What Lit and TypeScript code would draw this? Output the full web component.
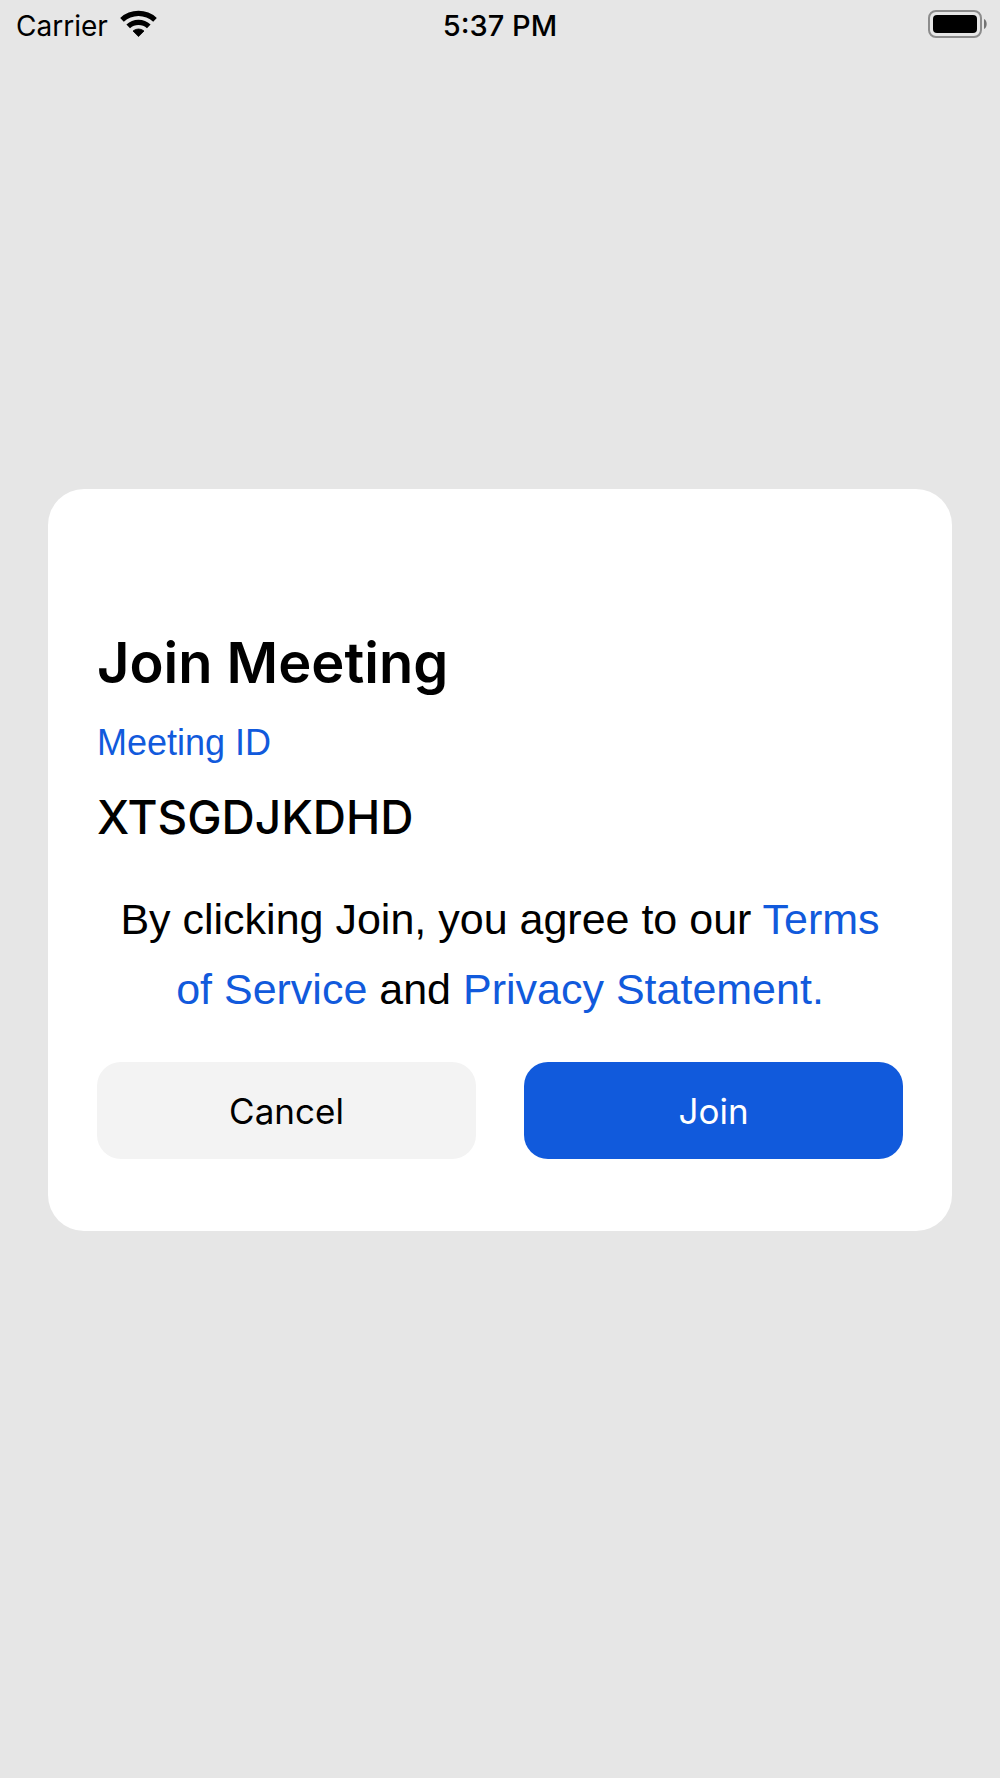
import { LitElement, html, css } from "lit";
import { customElement } from "lit/decorators.js";

@customElement("status-bar")
export class StatusBar extends LitElement {
  static styles = css`
    :host {
      display: grid;
      grid-template-columns: 1fr auto 1fr;
      align-items: center;
      height: 48px;
      padding: 0 13px;
      font-size: 28px;
      line-height: 36px;
      color: #000;
    }
    .network {
      display: flex;
      align-items: center;
      gap: 12px;
      padding-left: 3px;
    }
    .carrier,
    .time {
      padding-top: 4px;
    }
    .time {
      font-size: 29px;
      font-weight: 500;
    }
    .battery {
      justify-self: end;
    }
    svg {
      display: block;
    }
  `;

  render() {
    return html`
      <div class="network">
        <span class="carrier">Carrier</span>
        <svg width="37" height="28" viewBox="0 0 37 28" role="img" aria-label="Wi-Fi">
          <path d="M0.2 7.9A27 27 0 0 1 36.8 7.9L33.2 11.8A21.5 21.5 0 0 0 3.8 11.8Z" />
          <path d="M6.4 14.4A18 18 0 0 1 30.6 14.4L27 18.3A12.5 12.5 0 0 0 10 18.3Z" />
          <path d="M13 21A8.5 8.5 0 0 1 24 21L18.5 26.6Z" stroke="#000" stroke-width="0.8" stroke-linejoin="round" />
        </svg>
      </div>
      <time class="time">5:37 PM</time>
      <svg class="battery" width="59" height="28" viewBox="0 0 59 28" role="img" aria-label="Battery full">
        <rect x="1" y="1" width="52" height="26" rx="7" fill="none" stroke="#8c8c8c" stroke-width="2" />
        <rect x="5" y="5" width="44" height="18" rx="4" />
        <path d="M56 9C59.6 10.8 59.6 17.2 56 19Z" fill="#737373" />
      </svg>
    `;
  }
}

@customElement("join-card")
export class JoinCard extends LitElement {
  static styles = css`
    :host {
      display: block;
      flex: 1;
      box-sizing: border-box;
      padding: 136px 49px 72px;
      border-radius: 36px;
      background: #fff;
      color: #000;
    }
    .title {
      margin: 0;
      font-size: 56px;
      font-weight: 600;
      line-height: 76px;
    }
    .label {
      margin: 20px 0 0;
      color: #115adc;
      font-family: "Liberation Sans", Arial, sans-serif;
      font-size: 36px;
      line-height: 44px;
    }
    .code {
      margin: 22px 0 0;
      font-size: 46px;
      font-weight: 500;
      line-height: 60px;
    }
    .terms {
      margin: 37px 0 0;
      font-family: "Liberation Sans", Arial, sans-serif;
      font-size: 43px;
      line-height: 70px;
      text-align: center;
    }
    .terms a {
      color: #115adc;
      text-decoration: none;
    }
    .actions {
      display: grid;
      grid-template-columns: 1fr 1fr;
      gap: 48px;
      margin-top: 38px;
    }
    button {
      height: 97px;
      padding: 0;
      border: 0;
      border-radius: 24px;
      background: #f3f3f3;
      color: #000;
      font: inherit;
      font-size: 35px;
      cursor: pointer;
    }
    .primary {
      background: #115adc;
      color: #fff;
    }
  `;

  render() {
    return html`
      <h1 class="title">Join Meeting</h1>
      <p class="label">Meeting ID</p>
      <p class="code">XTSGDJKDHD</p>
      <p class="terms">
        By clicking Join, you agree to our
        <a href="#terms">Terms of Service</a> and
        <a href="#privacy">Privacy Statement.</a>
      </p>
      <div class="actions">
        <button type="button">Cancel</button>
        <button type="button" class="primary">Join</button>
      </div>
    `;
  }
}

@customElement("app-root")
export class AppRoot extends LitElement {
  static styles = css`
    :host {
      display: flex;
      flex-direction: column;
      min-height: 100vh;
      background: #e6e6e6;
      font-family: Inter, "Liberation Sans", sans-serif;
    }
    .stage {
      flex: 1;
      display: flex;
      align-items: center;
      padding: 0 48px 106px;
    }
  `;

  render() {
    return html`
      <status-bar></status-bar>
      <main class="stage">
        <join-card></join-card>
      </main>
    `;
  }
}
